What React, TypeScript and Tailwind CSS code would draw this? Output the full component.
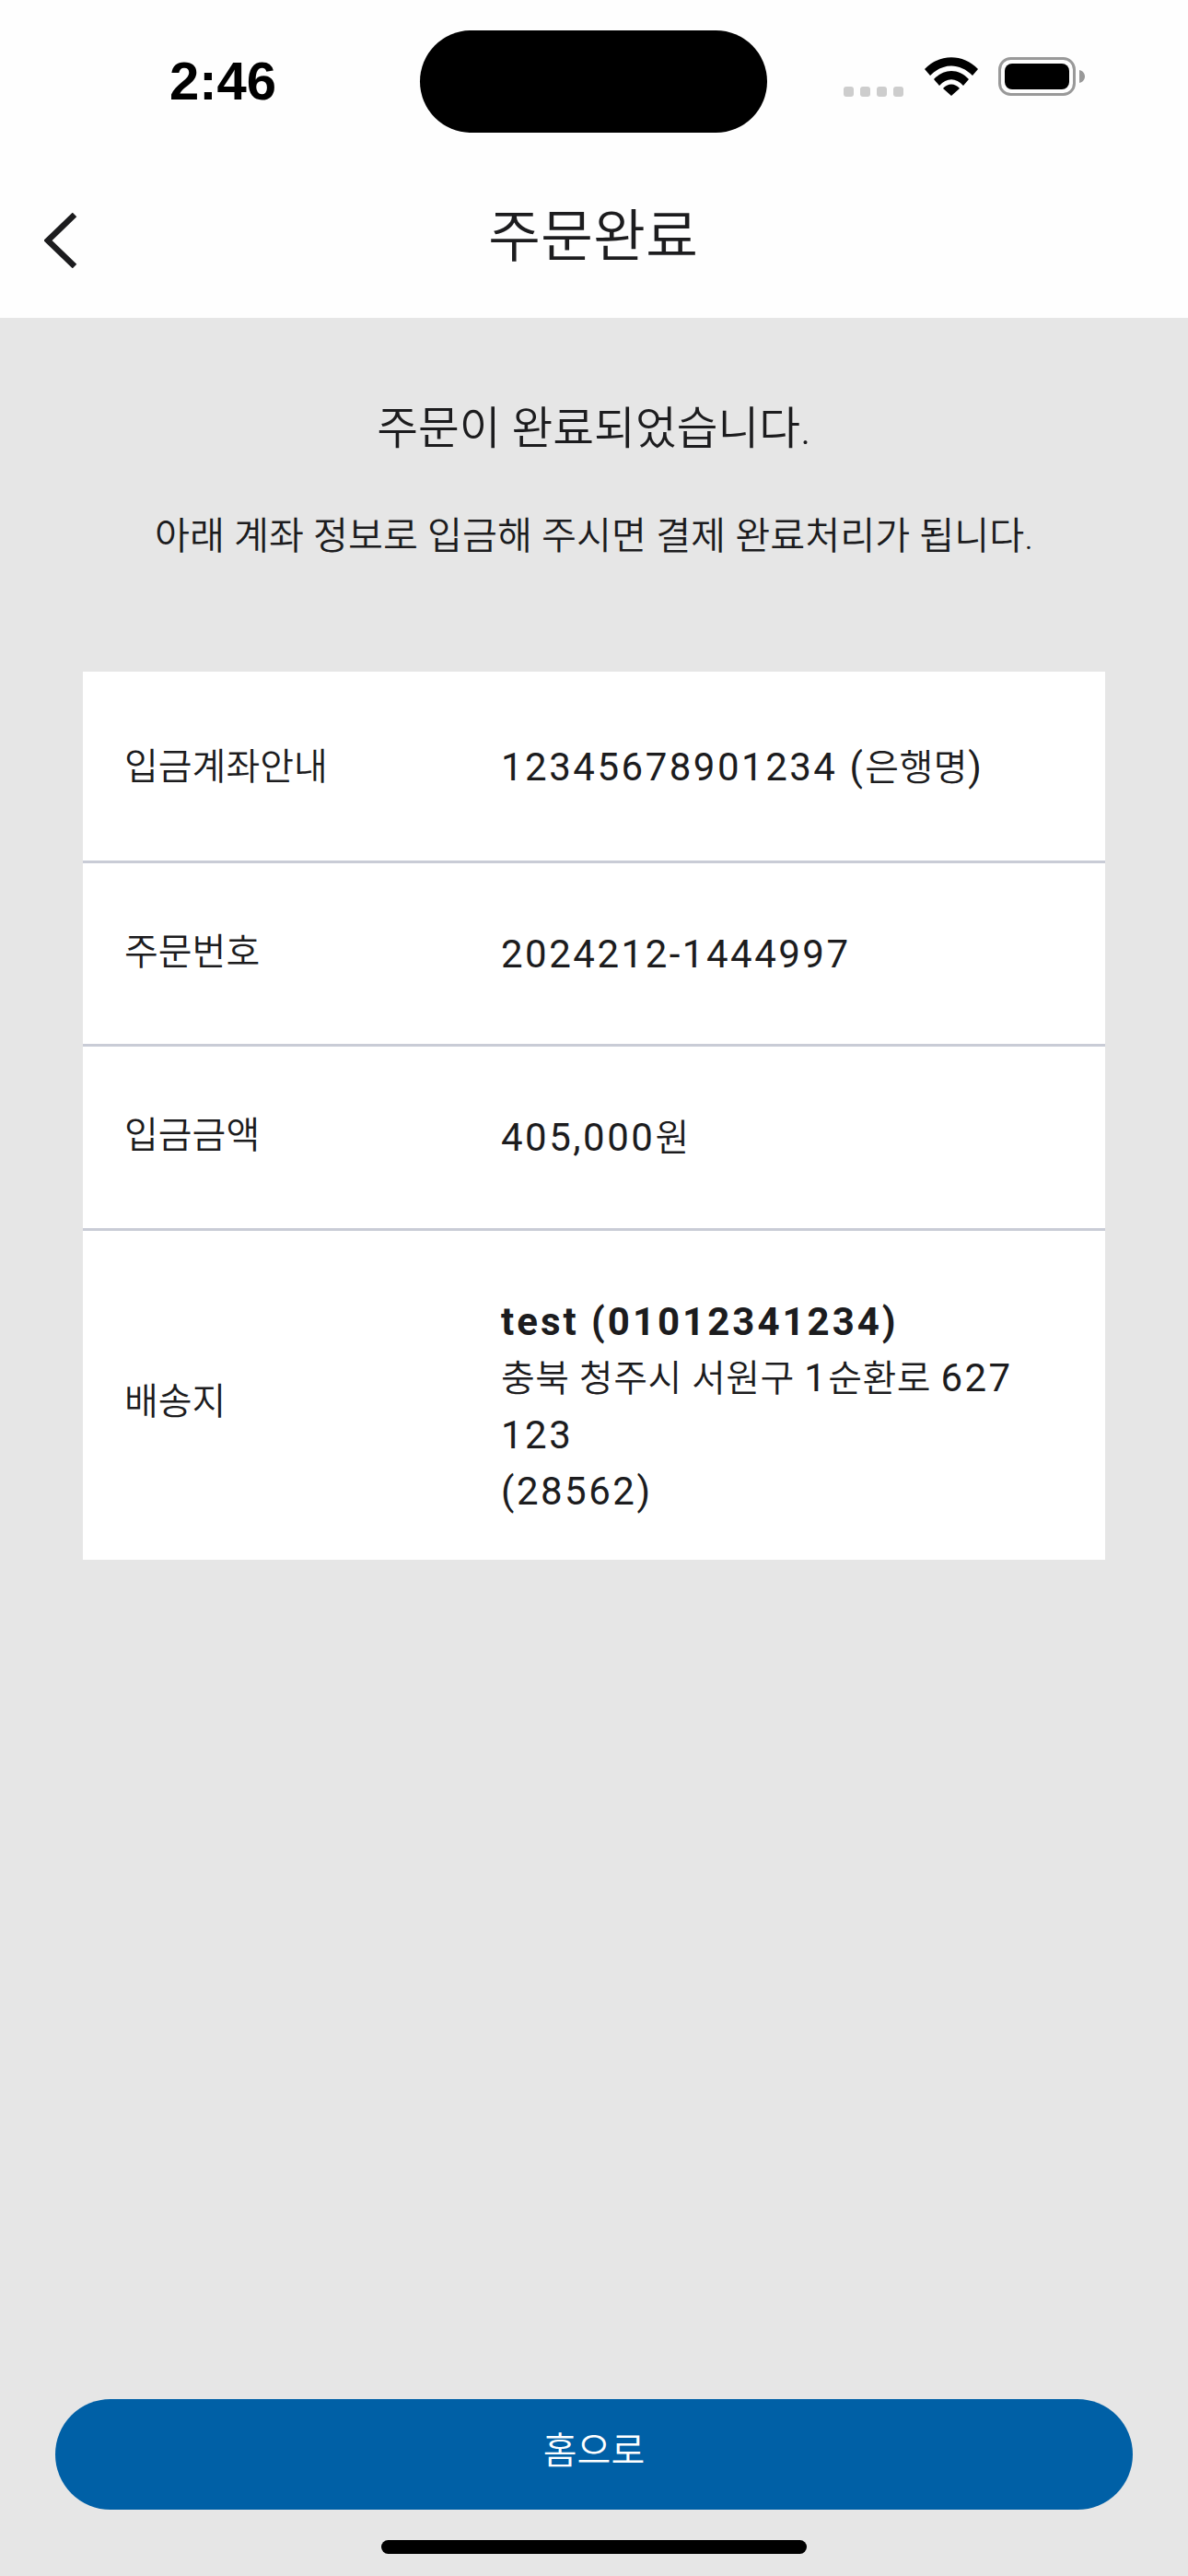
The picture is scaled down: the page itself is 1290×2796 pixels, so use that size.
import React from "react";

const font = { fontFamily: '"Roboto", "Noto Sans CJK KR", sans-serif' };

function Ko({ children }: { children: React.ReactNode }) {
  return <span className="text-[40px] font-[350] tracking-[0.5px]">{children}</span>;
}

function Row({ label, h, extra, labelExtra, valueExtra, children }: { label: string; h: string; extra?: string; labelExtra?: string; valueExtra?: string; children: React.ReactNode }) {
  return (
    <div className={`flex items-center pl-[45px] pr-[40px] ${h} ${extra ?? ""}`}>
      <div className={`w-[409px] shrink-0 text-[40px] font-[350] leading-[60px] text-[#1c1c1e] ${labelExtra ?? ""}`}>{label}</div>
      <div className={`flex-1 text-[42px] font-normal leading-[61px] tracking-[2.5px] text-[#1c1c1e] ${valueExtra ?? ""}`}>{children}</div>
    </div>
  );
}

export default function App() {
  return (
    <div className="flex h-[2796px] w-[1290px] flex-col overflow-hidden bg-[#e6e6e6]" style={font}>
      <div className="bg-[#fefefe]">
        <div className="flex h-[176px] items-start">
          <div className="w-[456px] pl-[184px] pt-[58px] text-[58px] font-bold leading-[60px] text-black" style={{ fontFamily: '"Liberation Sans", sans-serif' }}>2:46</div>
          <div className="mt-[33px] h-[111px] w-[377px] rounded-full bg-black" />
          <div className="ml-[83px] mt-[62px] flex items-start">
            <div className="mt-[32px] flex gap-[7px]">
              <span className="h-[11px] w-[11px] rounded-[3px] bg-[#cdcdcd]" />
              <span className="h-[11px] w-[11px] rounded-[3px] bg-[#cdcdcd]" />
              <span className="h-[11px] w-[11px] rounded-[3px] bg-[#cdcdcd]" />
              <span className="h-[11px] w-[11px] rounded-[3px] bg-[#cdcdcd]" />
            </div>
            <svg className="ml-[23px]" width="58" height="42" viewBox="0 0 58 42">
              <path d="M0 13 C16 -4 42 -4 58 13 L52 20 C38 6 20 6 6 20 Z" fill="#000" />
              <path d="M10 24 C21 12 37 12 48 24 L42 31 C34 22 24 22 16 31 Z" fill="#000" />
              <path d="M20 34 C25 28 33 28 38 34 L29 42 Z" fill="#000" />
            </svg>
            <svg className="ml-[22px]" width="94" height="42" viewBox="0 0 94 42">
              <rect x="1.5" y="1.5" width="81" height="39" rx="12" fill="none" stroke="#999" strokeWidth="3" />
              <rect x="7" y="7" width="70" height="28" rx="8" fill="#000" />
              <path d="M88 14 C92 15 94 18 94 21 C94 24 92 27 88 28 Z" fill="#999" />
            </svg>
          </div>
        </div>
        <div className="relative flex h-[169px] items-center justify-center">
          <svg className="absolute left-[48px] top-[55px]" width="36" height="60" viewBox="0 0 36 60">
            <path d="M33 2 L4 30 L33 58" fill="none" stroke="#1c1c1e" strokeWidth="6.5" />
          </svg>
          <div className="mb-[5px] mr-[2px] text-[62px] font-[350] leading-[80px] text-[#1c1c1e]">주문완료</div>
        </div>
      </div>

      <div className="flex flex-1 flex-col">
        <div className="mt-[89px] text-center text-[48.7px] font-[350] leading-[64px] text-[#1c1c1e]">주문이 완료되었습니다.</div>
        <div className="mt-[59px] text-center text-[41.3px] font-[350] leading-[50px] text-[#1c1c1e]">아래 계좌 정보로 입금해 주시면 결제 완료처리가 됩니다.</div>

        <div className="mx-[90px] mt-[122px] bg-white">
          <Row label="입금계좌안내" h="h-[208px]" extra="border-b-[3px] border-[#c9ccd6] pt-[3px]">12345678901234 (<Ko>은행명</Ko>)</Row>
          <Row label="주문번호" h="h-[199px]" extra="border-b-[3px] border-[#c9ccd6]" labelExtra="pb-[3px]">2024212-1444997</Row>
          <Row label="입금금액" h="h-[200px]" extra="border-b-[3px] border-[#c9ccd6]" labelExtra="pb-[3px]">405,000<Ko>원</Ko></Row>
          <Row label="배송지" h="h-[357px]" extra="pt-[14px]" valueExtra="pt-[10px]">
            <div className="font-bold tracking-[3px]">test (01012341234)</div>
            <div><Ko>충북 청주시 서원구 </Ko>1<Ko>순환로 </Ko>627</div>
            <div>123</div>
            <div>(28562)</div>
          </Row>
        </div>

        <div className="flex-1" />
        <div className="mx-[60px] flex h-[120px] items-center justify-center rounded-full bg-[#0060a6] pb-[6px] text-[40px] font-[350] text-white">홈으로</div>
        <div className="mx-auto mb-[24px] mt-[33px] h-[15px] w-[462px] rounded-full bg-black" />
      </div>
    </div>
  );
}
